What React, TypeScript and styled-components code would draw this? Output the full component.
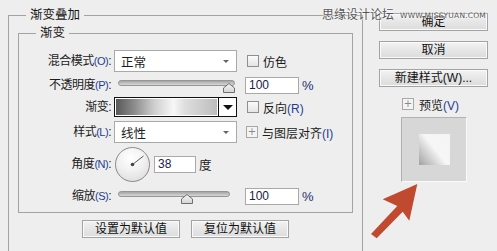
import styled, { createGlobalStyle } from 'styled-components';

const GlobalStyle = createGlobalStyle`
  html, body {
    margin: 0;
    padding: 0;
    background: #eeeeee;
  }
  body {
    font-family: "Liberation Sans", "Noto Sans CJK SC", sans-serif;
    font-size: 12px;
    color: #1c1c1c;
  }
`;

const Page = styled.div`
  position: relative;
  width: 497px;
  height: 251px;
  overflow: hidden;
  display: flex;
  background: #eeeeee;
`;

const LeftCol = styled.div`
  width: 363px;
  padding: 8px 0 0 8px;
  box-sizing: border-box;
`;

const RightCol = styled.div`
  flex: 1;
  display: flex;
  flex-direction: column;
  padding: 13px 0 0 16px;
`;

const Group = styled.fieldset<{ $outer?: boolean }>`
  margin: ${p => (p.$outer ? '0' : '4px 9px 0 9px')};
  padding: 0;
  border: 1px solid #a3a3a3;
  min-inline-size: 0;
  height: ${p => (p.$outer ? '300px' : 'auto')};
  box-sizing: border-box;
  width: ${p => (p.$outer ? '355px' : 'auto')};
`;

const Legend = styled.legend`
  margin-left: 17px;
  padding: 0 4px;
  font-size: 12.5px;
  line-height: 14px;
  color: #151515;
`;

const Form = styled.div`
  display: grid;
  grid-template-columns: 95px 131px 1fr;
  grid-template-rows: 22px 26px 18px 32px 32px 32px;
  align-items: center;
  padding-top: 10px;
`;

const Label = styled.div`
  text-align: right;
  padding-right: 3px;
  white-space: nowrap;
  line-height: 14px;
  font-size: 12px;
  letter-spacing: -0.5px;
`;

const Key = styled.span<{ $size?: number }>`
  color: #1f3d8f;
  font-size: ${p => p.$size ?? 12}px;
`;

const Select = styled.div`
  width: 123px;
  height: 22px;
  box-sizing: border-box;
  background: #ffffff;
  border: 1px solid #a9a9a9;
  display: flex;
  align-items: center;
  justify-content: space-between;
  padding: 0 7px 0 6px;
  font-size: 12.5px;
`;

const SmallCaret = styled.span`
  width: 0;
  height: 0;
  border-left: 3px solid transparent;
  border-right: 3px solid transparent;
  border-top: 3px solid #666;
`;

const SliderWrap = styled.div<{ $w: number }>`
  position: relative;
  width: ${p => p.$w}px;
  height: 14px;
  margin-left: 4px;
`;

const Track = styled.div`
  margin-top: 2px;
  height: 4px;
  border: 1px solid #969696;
  border-radius: 4px;
  background: linear-gradient(#a5a5a5, #d8d8d8);
`;

const Thumb = styled.svg`
  position: absolute;
  top: 5px;
  width: 12px;
  height: 10px;
`;

const Cell = styled.div`
  display: flex;
  align-items: center;
  gap: 4px;
  white-space: nowrap;
  font-size: 12px;
`;

const Check = styled.span`
  width: 10px;
  height: 10px;
  margin-left: 2px;
  border: 1px solid #8f8f8f;
  background: linear-gradient(#fbfbfb, #e4e4e4);
`;

const PlusBox = styled.span`
  width: 10px;
  height: 10px;
  margin-left: 1px;
  border: 1px solid #a8a8a8;
  background: #f4f4f4;
  color: #8a8a8a;
  font-family: "DejaVu Sans", sans-serif;
  font-size: 10px;
  line-height: 10px;
  text-align: center;
`;

const Field = styled.div<{ $w: number }>`
  width: ${p => p.$w}px;
  height: 17px;
  box-sizing: border-box;
  background: #ffffff;
  border: 1px solid #a9a9a9;
  padding-left: 3px;
  display: flex;
  align-items: center;
  font-size: 12px;
  color: #1a1a4a;
`;

const Pct = styled.span`
  margin-left: -1px;
  font-size: 13px;
  color: #1c2d6e;
`;

const GradPicker = styled.div`
  width: 123px;
  height: 20px;
  box-sizing: border-box;
  border: 1px solid #111;
  display: flex;
  background: #ffffff;
`;

const GradFill = styled.div`
  flex: 1;
  margin: 1px;
  background: linear-gradient(
    90deg,
    #585858 0%,
    #8c8c8c 18%,
    #cfcfcf 38%,
    #f7f7f7 57%,
    #dedede 68%,
    #bdbdbd 100%
  );
`;

const GradDrop = styled.div`
  width: 17px;
  border-left: 1px solid #111;
  display: flex;
  align-items: center;
  justify-content: center;
`;

const BigCaret = styled.span`
  width: 0;
  height: 0;
  border-left: 5px solid transparent;
  border-right: 5px solid transparent;
  border-top: 5px solid #111;
`;

const AngleCell = styled.div`
  grid-column: 2 / 4;
  display: flex;
  align-items: center;
`;

const Dial = styled.div`
  width: 35px;
  height: 35px;
  margin-left: 1px;
  box-sizing: border-box;
  border-radius: 50%;
  border: 1px solid #8a8a8a;
  background: radial-gradient(circle at 45% 30%, #ffffff 0%, #f1f1f1 45%, #d6d6d6 100%);
`;

const Degree = styled.span`
  margin-left: 3px;
  font-size: 12.5px;
`;

const Buttons = styled.div`
  display: flex;
  justify-content: center;
  gap: 11px;
  margin-top: 7px;
`;

const Button = styled.div<{ $w: number }>`
  width: ${p => p.$w}px;
  height: 18px;
  box-sizing: border-box;
  border: 1px solid #a3a3a3;
  box-shadow: inset 0 0 0 1px #fafafa;
  background: linear-gradient(#f3f3f3, #e6e6e6 50%, #dcdcdc);
  display: flex;
  align-items: center;
  justify-content: center;
  font-size: 12px;
  line-height: 14px;
  color: #111;
  margin-bottom: 10px;
`;

const PreviewToggle = styled.div`
  display: flex;
  align-items: center;
  gap: 5px;
  margin: 0 0 0 22px;
  height: 14px;
  font-size: 12px;
`;

const PreviewBox = styled.div`
  width: 66px;
  height: 65px;
  margin: 6px 0 0 22px;
  box-sizing: border-box;
  border-top: 1px solid #b2b2b2;
  border-left: 1px solid #b2b2b2;
  border-right: 1px solid #fafafa;
  border-bottom: 1px solid #fafafa;
  background: #d7d7d7;
  display: flex;
  align-items: center;
  justify-content: center;
`;

const Swatch = styled.div`
  width: 31px;
  height: 31px;
  margin-left: 1px;
  background: linear-gradient(52deg, #a2a2a2 0%, #d2d2d2 30%, #f6f6f6 52%, #f4f4f4 100%);
`;

const Watermark = styled.div`
  position: absolute;
  top: 6px;
  left: 322px;
  display: flex;
  align-items: center;
  gap: 6px;
  color: #555;
  text-shadow: 0 0 2px #fff, 0 0 2px #fff;
  white-space: nowrap;
`;

const WmTitle = styled.span`
  font-family: "Noto Sans CJK SC", sans-serif;
  font-size: 12px;
  line-height: 16px;
`;

const WmUrl = styled.span`
  font-family: "DejaVu Sans", sans-serif;
  font-size: 7.5px;
  letter-spacing: 0.2px;
  margin-top: 3px;
`;

const Arrow = styled.svg`
  position: absolute;
  left: 360px;
  top: 180px;
  width: 70px;
  height: 65px;
`;

function Slider({ width, pos }: { width: number; pos: number }) {
  return (
    <SliderWrap $w={width}>
      <Track />
      <Thumb viewBox="0 0 12 10" style={{ left: pos - 6 }}>
        <defs>
          <linearGradient id="th" x1="0" y1="0" x2="0" y2="1">
            <stop offset="0" stopColor="#f6f6f6" />
            <stop offset="1" stopColor="#d4d4d4" />
          </linearGradient>
        </defs>
        <polygon points="6,0.5 11.5,5 11.5,9.5 0.5,9.5 0.5,5" fill="url(#th)" stroke="#6f6f6f" strokeWidth="1" />
      </Thumb>
    </SliderWrap>
  );
}

export default function App() {
  return (
    <Page>
      <GlobalStyle />
      <LeftCol>
        <Group $outer>
          <Legend>渐变叠加</Legend>
          <Group>
            <Legend>渐变</Legend>
            <Form>
              <Label>混合模式<Key $size={11}>(O)</Key>:</Label>
              <Select>
                <span>正常</span>
                <SmallCaret />
              </Select>
              <Cell>
                <Check />
                <span>仿色</span>
              </Cell>

              <Label>不透明度<Key $size={11}>(P)</Key>:</Label>
              <Slider width={117} pos={111} />
              <Cell>
                <Field $w={54}>100</Field>
                <Pct>%</Pct>
              </Cell>

              <Label>渐变:</Label>
              <GradPicker>
                <GradFill />
                <GradDrop>
                  <BigCaret />
                </GradDrop>
              </GradPicker>
              <Cell>
                <Check />
                <span>反向<Key>(R)</Key></span>
              </Cell>

              <Label>样式<Key $size={11}>(L)</Key>:</Label>
              <Select>
                <span>线性</span>
                <SmallCaret />
              </Select>
              <Cell>
                <PlusBox>+</PlusBox>
                <span>与图层对齐<Key>(I)</Key></span>
              </Cell>

              <Label>角度<Key $size={11}>(N)</Key>:</Label>
              <AngleCell>
                <Dial>
                  <svg width="33" height="33" viewBox="0 0 33 33">
                    <line x1="16.5" y1="16.5" x2="27.5" y2="8" stroke="#5a5a5a" strokeWidth="1" />
                    <circle cx="16.5" cy="16.5" r="1.8" fill="#444" />
                  </svg>
                </Dial>
                <Field $w={42} style={{ marginLeft: 4 }}>38</Field>
                <Degree>度</Degree>
              </AngleCell>

              <Label>缩放<Key $size={11}>(S)</Key>:</Label>
              <Slider width={112} pos={69} />
              <Cell>
                <Field $w={54}>100</Field>
                <Pct>%</Pct>
              </Cell>
            </Form>
          </Group>
          <Buttons>
            <Button $w={98}>设置为默认值</Button>
            <Button $w={98}>复位为默认值</Button>
          </Buttons>
        </Group>
      </LeftCol>
      <RightCol>
        <Button $w={109}>确定</Button>
        <Button $w={109}>取消</Button>
        <Button $w={109}>新建样式(W)...</Button>
        <PreviewToggle>
          <PlusBox>+</PlusBox>
          <span>预览<Key>(V)</Key></span>
        </PreviewToggle>
        <PreviewBox>
          <Swatch />
        </PreviewBox>
      </RightCol>
      <Watermark>
        <WmTitle>思缘设计论坛</WmTitle>
        <WmUrl>WWW.MISSYUAN.COM</WmUrl>
      </Watermark>
      <Arrow viewBox="0 0 70 65">
        <polygon
          points="57.3,4 22.7,19.3 37.3,26 11,54 16.7,58.3 42.7,31.7 49.3,40.7"
          fill="#bf4a2f"
        />
      </Arrow>
    </Page>
  );
}
